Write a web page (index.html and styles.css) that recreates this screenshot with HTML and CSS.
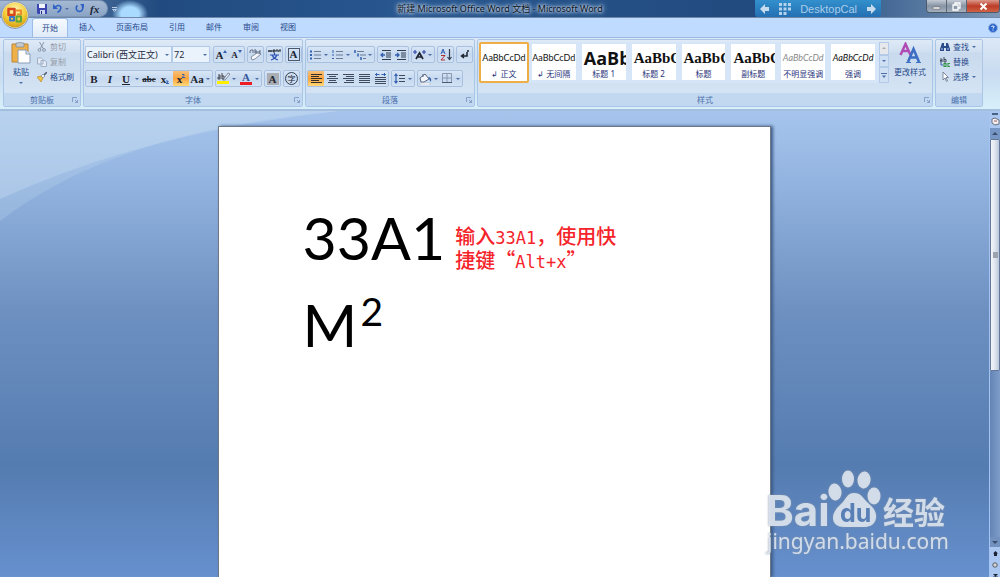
FILE: index.html
```html
<!DOCTYPE html>
<html lang="zh-CN">
  <head>
    <meta charset="UTF-8">
    <title>新建 Microsoft Office Word 文档 - Microsoft Word</title>
    <link rel="stylesheet" href="styles.css">
  </head>
  <body>
    <svg class="defs" aria-hidden="true">
      <symbol id="down" viewBox="0 0 4 2"><path d="M0 0h4L2 2z" fill="#4d6fa6"/></symbol>
      <symbol id="launch" viewBox="0 0 6 6"><path d="M.5 5V.5H5M3 3l2.500 2.500M5.500 3v2.500H3" fill="none" stroke="#86a2ca"/></symbol>
      <symbol id="arrow" viewBox="0 0 10 10"><path d="M0 5l5-5v3h4v4H5v3z" fill="#c6dcee"/></symbol>
    </svg>

    <div class="titlebar">
      <div class="quick">
        <button class="plain" aria-label="保存"><svg width="10" height="10" viewBox="0 0 10 10"><path d="M0 0h10v10H1L0 9z" fill="#3b45b0"/><path d="M2 0h6v4H2z" fill="#f2f5fd"/><path d="M3 6h5v4H3z" fill="#c9d3f0"/><path d="M4 7h1v3H4z" fill="#252c80"/></svg></button>
        <button class="plain" aria-label="撤消"><svg width="9" height="9" viewBox="0 0 9 9"><path d="M2 3.500Q5 0 7.500 2.500Q9 5.500 4.500 8.500" fill="none" stroke="#2f62c4" stroke-width="1.600"/><path d="M0 0v5h5z" fill="#2f62c4"/></svg></button>
        <svg class="caret" width="4" height="2"><use href="#down"/></svg>
        <button class="plain" aria-label="恢复"><svg width="9" height="9" viewBox="0 0 9 9"><path d="M2.500 1.500A3.300 3.300 0 1 0 7 2" fill="none" stroke="#2f62c4" stroke-width="1.600"/><path d="M5 0h4v4z" fill="#2f62c4"/></svg></button>
        <button class="plain fx">fx</button>
      </div>
      <button class="plain custom" aria-label="自定义快速访问工具栏"><svg width="5" height="5" viewBox="0 0 5 5"><path d="M0 .5h5M.5 2.500h4L2.500 4.500z" fill="none" stroke="#b9cde6"/></svg></button>
      <div class="title">新建 Microsoft Office Word 文档 - Microsoft Word</div>
      <div class="tools">
        <div class="cal">
          <svg width="10" height="10"><use href="#arrow"/></svg>
          <svg width="12" height="12" viewBox="0 0 12 12"><path d="M0 1.500h12M0 6h12M0 10.500h8" stroke="#b4d2ea" stroke-width="3" stroke-dasharray="3 1.500"/></svg>
          <span>DesktopCal</span>
          <svg class="flip" width="10" height="10"><use href="#arrow"/></svg>
        </div>
        <div class="window">
          <button aria-label="最小化"><svg width="9" height="9" viewBox="0 0 9 9"><path d="M1 5h7v2H1z" fill="#fff" stroke="#555" stroke-width=".5"/></svg></button>
          <button aria-label="还原"><svg width="9" height="9" viewBox="0 0 9 9"><path d="M3 3V1h5v5H6M1 3h5v5H1z" fill="none" stroke="#fff" stroke-width="1.300"/></svg></button>
          <button class="close" aria-label="关闭"><svg width="9" height="9" viewBox="0 0 9 9"><path d="M1.500 1.500l6 6M7.500 1.500l-6 6" stroke="#fff" stroke-width="2"/></svg></button>
        </div>
      </div>
    </div>

    <button class="orb" aria-label="Office 按钮">
      <svg width="28" height="28" viewBox="0 0 28 28">
        <defs><radialGradient id="gold" cx=".5" cy=".3" r=".7"><stop offset="0" stop-color="#fff6b8"/><stop offset=".6" stop-color="#f3cf3a"/><stop offset="1" stop-color="#d59c12"/></radialGradient></defs>
        <circle cx="14" cy="14" r="13.500" fill="#dfe6ef" stroke="#8a98ae"/>
        <circle cx="14" cy="14" r="12.500" fill="url(#gold)"/>
        <path d="M7.500 8h6v6h-6z" fill="none" stroke="#d8471c" stroke-width="2.500" stroke-linejoin="round"/>
        <path d="M15 9.500h5v4h-4" fill="none" stroke="#e98b28" stroke-width="2" stroke-linejoin="round"/>
        <path d="M9 16h4v3.500H9z" fill="none" stroke="#3f77c8" stroke-width="2" stroke-linejoin="round"/>
        <path d="M15.500 15.500h4.500v5h-4.500z" fill="none" stroke="#5ca63c" stroke-width="2" stroke-linejoin="round"/>
      </svg>
    </button>

    <div class="tabs">
      <button class="tab active">开始</button>
      <button class="tab">插入</button>
      <button class="tab">页面布局</button>
      <button class="tab">引用</button>
      <button class="tab">邮件</button>
      <button class="tab">审阅</button>
      <button class="tab">视图</button>
      <button class="plain help" aria-label="帮助"><svg width="10" height="10" viewBox="0 0 10 10"><circle cx="5" cy="5" r="4.500" fill="#2b66cf" stroke="#8fb0df"/><path d="M3.500 4Q4 2.500 5.500 3T5 5.500M5 6.500v1" fill="none" stroke="#fff"/></svg></button>
    </div>

    <div class="ribbon">
      <div class="group clipboard">
        <div class="content">
          <button class="big">
            <svg width="20" height="22" viewBox="0 0 20 22"><path d="M1 2h16v18H1z" fill="#eeb047" stroke="#c08532"/><path d="M5 1h2q2-2 4 0h2v4H5z" fill="#c3c8cc" stroke="#7d8690" stroke-width=".7"/><path d="M7 8h8l4 4v9H7z" fill="#fff" stroke="#8a9cba"/><path d="M15 8v4h4" fill="#dbe5f3" stroke="#8a9cba"/></svg>
            粘贴
            <svg class="caret" width="4" height="2"><use href="#down"/></svg>
          </button>
          <div class="list">
            <button class="item off"><svg width="10" height="10" viewBox="0 0 10 10"><path d="M2.500 0l4 7M7 0L3 7" stroke="#8796ac"/><circle cx="2.500" cy="8" r="1.400" fill="none" stroke="#8796ac"/><circle cx="7" cy="8" r="1.400" fill="none" stroke="#8796ac"/></svg>剪切</button>
            <button class="item off"><svg width="10" height="10" viewBox="0 0 10 10"><path d="M.5 1h4l1.500 1.500V7H.5zM4 3.500h4L9.500 5v4.500H4z" fill="#e4ebf5" stroke="#a0b0c8"/></svg>复制</button>
            <button class="item"><svg width="10" height="10" viewBox="0 0 10 10"><path d="M0 5l4-1 2 2-2 4z" fill="#efc443" stroke="#b38222" stroke-width=".6"/><path d="M4 4l2-2 2 2-2 2z" fill="#eef2f8" stroke="#66748c" stroke-width=".6"/><path d="M7 3l3-3" stroke="#5a6078" stroke-width="1.600"/></svg>格式刷</button>
          </div>
        </div>
        <div class="label">剪贴板<svg width="6" height="6"><use href="#launch"/></svg></div>
      </div>

      <div class="group font">
        <div class="content rows">
          <div class="row">
            <div class="combos">
              <label class="combo name"><select aria-label="字体"><option>Calibri (西文正文)</option></select><svg class="caret" width="4" height="2"><use href="#down"/></svg></label>
              <label class="combo size"><select aria-label="字号"><option>72</option></select><svg class="caret" width="4" height="2"><use href="#down"/></svg></label>
            </div>
            <div class="set">
              <button class="serif grow" aria-label="增大字体">A<svg width="4" height="3" viewBox="0 0 4 3"><path d="M0 3h4L2 0z" fill="#3560b0"/></svg></button>
              <button class="serif small shrink" aria-label="缩小字体">A<svg width="4" height="3" viewBox="0 0 4 3"><path d="M0 0h4L2 3z" fill="#3560b0"/></svg></button>
            </div>
            <div class="set"><button aria-label="清除格式"><svg width="13" height="13" viewBox="0 0 13 13"><path d="M1 5V3l1-1h2v3M6 1v4h2V3H6M12 3h-2v2h2" fill="none" stroke="#444f68" stroke-width=".8"/><path d="M2 9l6-4 4 1-6 5-3 1z" fill="#f4f6fb" stroke="#6d7a94" stroke-width=".8"/></svg></button></div>
            <div class="set"><button aria-label="拼音指南"><svg width="13" height="13" viewBox="0 0 13 13"><path d="M0 2l1 2 1-2 1 2 1-2M5 3h2V2H5v2h2M8 4V2h2v2M11 4V2h2v2" fill="none" stroke="#1d2430" stroke-width=".9"/><path d="M6.500 5v1.500M2 7h9M4 7q2 4 6 5M9 7q-2 4-6 5" fill="none" stroke="#2c50b4" stroke-width="1.200"/></svg></button></div>
            <div class="set"><button class="serif"><b class="boxed">A</b></button></div>
          </div>
          <div class="row">
            <div class="set wide">
              <button class="serif">B</button>
              <button class="serif italic">I</button>
              <button class="serif"><u>U</u></button>
              <svg class="caret" width="4" height="2"><use href="#down"/></svg>
              <button class="serif small"><s>abc</s></button>
              <button class="serif" aria-label="下标">x<svg width="3" height="4" viewBox="0 0 3 4"><path d="M0 1h2v1L0 3.500h3" fill="none" stroke="#3560b0"/></svg></button>
              <button class="serif on up" aria-label="上标">x<svg width="3" height="4" viewBox="0 0 3 4"><path d="M0 .5h2v1L0 3.500h3" fill="none" stroke="#3560b0"/></svg></button>
              <button class="serif">Aa</button>
              <svg class="caret" width="4" height="2"><use href="#down"/></svg>
            </div>
            <div class="set">
              <button aria-label="突出显示"><svg width="13" height="13" viewBox="0 0 13 13"><path d="M0 9h12v3H0z" fill="#ffee00"/><path d="M1 3h2v4H1V5h2M5 1v6h2V4H5" fill="none" stroke="#333" stroke-width=".9"/><path d="M6 8l5-7 2 1-5 6z" fill="#e9eef8" stroke="#56647e" stroke-width=".7"/></svg></button>
              <svg class="caret" width="4" height="2"><use href="#down"/></svg>
              <button class="serif color">A</button>
              <svg class="caret" width="4" height="2"><use href="#down"/></svg>
            </div>
            <div class="set"><button class="serif"><b class="shade">A</b></button></div>
            <div class="set"><button><span class="ring">字</span></button></div>
          </div>
        </div>
        <div class="label">字体<svg width="6" height="6"><use href="#launch"/></svg></div>
      </div>

      <div class="group para">
        <div class="content rows">
          <div class="row">
            <div class="set">
              <button aria-label="项目符号"><svg width="11" height="10" viewBox="0 0 11 10"><path d="M0 1.500h2M0 5h2M0 8.500h2" stroke="#3560b0" stroke-width="2"/><path d="M4 1.500h7M4 5h7M4 8.500h7" stroke="#6c7c96"/></svg></button>
              <svg class="caret" width="4" height="2"><use href="#down"/></svg>
              <button aria-label="编号"><svg width="11" height="10" viewBox="0 0 11 10"><path d="M1 0v3M0 5h2M0 8.500h2" stroke="#3560b0"/><path d="M4 1.500h7M4 5h7M4 8.500h7" stroke="#6c7c96"/></svg></button>
              <svg class="caret" width="4" height="2"><use href="#down"/></svg>
              <button aria-label="多级列表"><svg width="12" height="10" viewBox="0 0 12 10"><path d="M1 0v3M4 3.500v3M7 7v3" stroke="#3560b0" stroke-width="1.500"/><path d="M3 1.500h7M6 5h6M9 8.500h3" stroke="#6c7c96"/></svg></button>
              <svg class="caret" width="4" height="2"><use href="#down"/></svg>
            </div>
            <div class="set">
              <button aria-label="减少缩进"><svg width="11" height="10" viewBox="0 0 11 10"><path d="M2 .5h9M6 3h5M6 5h5M6 7h5M2 9.500h9" stroke="#333d50"/><path d="M5 5H1m2-2L1 5l2 2" fill="none" stroke="#3560b0" stroke-width="1.300"/></svg></button>
              <button aria-label="增加缩进"><svg width="11" height="10" viewBox="0 0 11 10"><path d="M2 .5h9M6 3h5M6 5h5M6 7h5M2 9.500h9" stroke="#333d50"/><path d="M0 5h4M2 3l2 2-2 2" fill="none" stroke="#3560b0" stroke-width="1.300"/></svg></button>
            </div>
            <div class="set">
              <button aria-label="中文版式"><svg width="13" height="10" viewBox="0 0 13 10"><path d="M3 9l3.500-6L10 9M5 7h3" fill="none" stroke="#1e2430" stroke-width="1.700"/><path d="M0 2h4M2 0v4M9 2h4M11 0v4" stroke="#3148a8" stroke-width="1.200"/></svg></button>
              <svg class="caret" width="4" height="2"><use href="#down"/></svg>
            </div>
            <div class="set"><button aria-label="排序"><svg width="12" height="13" viewBox="0 0 12 13"><path d="M1 6l2-5 2 5M2 4h2" fill="none" stroke="#3560b0"/><path d="M1 7.500h4L1 12h4" fill="none" stroke="#b03030"/><path d="M9.500 1v10M7.500 9l2 2.500 2-2.500" fill="none" stroke="#333d50" stroke-width="1.200"/></svg></button></div>
            <div class="set"><button aria-label="显示标记"><svg width="10" height="10" viewBox="0 0 10 10"><path d="M8 0v2M7 2v4H2M4 4L1.500 6 4 8" fill="none" stroke="#1e2430" stroke-width="1.500"/></svg></button></div>
          </div>
          <div class="row">
            <div class="set wide">
              <button class="on" aria-label="左对齐"><svg width="11" height="9" viewBox="0 0 11 9"><path d="M0 .5h11M0 2.500h8M0 4.500h11M0 6.500h8M0 8.500h11" stroke="#33302c"/></svg></button>
              <button aria-label="居中"><svg width="11" height="9" viewBox="0 0 11 9"><path d="M0 .5h11M2 2.500h7M0 4.500h11M2 6.500h7M1 8.500h9" stroke="#404b60"/></svg></button>
              <button aria-label="右对齐"><svg width="11" height="9" viewBox="0 0 11 9"><path d="M0 .5h11M3 2.500h8M0 4.500h11M3 6.500h8M1 8.500h10" stroke="#404b60"/></svg></button>
              <button aria-label="两端对齐"><svg width="11" height="9" viewBox="0 0 11 9"><path d="M0 .5h11M0 2.500h11M0 4.500h11M0 6.500h11M0 8.500h11" stroke="#404b60"/></svg></button>
              <button aria-label="分散对齐"><svg width="11" height="11" viewBox="0 0 11 11"><path d="M0 4.500h11M0 6.500h11M0 8.500h11M0 10.500h11" stroke="#404b60"/><path d="M0 1.500h4.500M6.500 1.500H11M2 0L.5 1.500 2 3M9 0l1.500 1.500L9 3" fill="none" stroke="#3560b0"/></svg></button>
            </div>
            <div class="set">
              <button aria-label="行距"><svg width="12" height="11" viewBox="0 0 12 11"><path d="M5 2.500h6M5 5.500h6M5 8.500h6" stroke="#404b60"/><path d="M2 1v9M.5 3L2 1l1.500 2M.5 8L2 10l1.500-2" fill="none" stroke="#3560b0" stroke-width="1.200"/></svg></button>
              <svg class="caret" width="4" height="2"><use href="#down"/></svg>
            </div>
            <div class="set">
              <button aria-label="底纹"><svg width="13" height="12" viewBox="0 0 13 12"><path d="M1 5l5-4 4 5-5 3H2z" fill="#f3f6fb" stroke="#5a6880"/><path d="M4 4V1" stroke="#5a6880"/><path d="M9 4q4 0 3 5-2-2-2-4z" fill="#3560b0"/><path d="M1 10h10v2H1z" fill="#fff" stroke="#9aa8bd" stroke-width=".5"/></svg></button>
              <svg class="caret" width="4" height="2"><use href="#down"/></svg>
              <button aria-label="边框"><svg width="11" height="11" viewBox="0 0 11 11"><path d="M.5.5h9v9h-9zM5 0v10M0 5h10" fill="none" stroke="#8a98b2"/><path d="M0 9.500h10" stroke="#4d5a72"/></svg></button>
              <svg class="caret" width="4" height="2"><use href="#down"/></svg>
            </div>
          </div>
        </div>
        <div class="label">段落<svg width="6" height="6"><use href="#launch"/></svg></div>
      </div>

      <div class="group styles">
        <div class="content">
          <div class="gallery">
            <button class="style active"><span class="body">AaBbCcDd</span>↲ 正文</button>
            <button class="style"><span class="body">AaBbCcDd</span>↲ 无间隔</button>
            <button class="style"><span class="h1">AaBb</span>标题 1</button>
            <button class="style"><span class="h2">AaBbC</span>标题 2</button>
            <button class="style"><span class="h2">AaBbC</span>标题</button>
            <button class="style"><span class="h2">AaBbC</span>副标题</button>
            <button class="style"><span class="body subtle">AaBbCcDd</span>不明显强调</button>
            <button class="style"><span class="body italic">AaBbCcDd</span>强调</button>
            <div class="more">
              <button class="off" aria-label="上一行"><svg width="4" height="2" viewBox="0 0 4 2"><path d="M0 2h4L2 0z" fill="#a9a9a9"/></svg></button>
              <button aria-label="下一行"><svg width="4" height="2"><use href="#down"/></svg></button>
              <button aria-label="其他"><svg width="6" height="5" viewBox="0 0 6 5"><path d="M0 .5h6" stroke="#4d6fa6"/><path d="M1 2.500h4L3 5z" fill="#4d6fa6"/></svg></button>
            </div>
          </div>
          <button class="big">
            <svg width="22" height="22" viewBox="0 0 22 22"><path d="M1.500 13L6.500 2l5 11M3 9h7" fill="none" stroke="#b04bb5" stroke-width="2.500"/><path d="M9 20l5.500-13L20 20M11 15.500h7" fill="none" stroke="#3c6fc4" stroke-width="2.600"/><path d="M7 20.500h5M17 20.500h5" stroke="#3c6fc4"/></svg>
            更改样式
            <svg class="caret" width="4" height="2"><use href="#down"/></svg>
          </button>
        </div>
        <div class="label">样式<svg width="6" height="6"><use href="#launch"/></svg></div>
      </div>

      <div class="group edit">
        <div class="content">
          <div class="list">
            <button class="item"><svg width="10" height="10" viewBox="0 0 10 10"><path d="M2 1h2v3h2V1h2l2 6v2H6V6H4v3H0V7z" fill="#2c4b8c"/><path d="M1 7h2M7 7h2" stroke="#b8cdf0"/></svg>查找<svg class="caret" width="4" height="2"><use href="#down"/></svg></button>
            <button class="item"><svg width="10" height="10" viewBox="0 0 10 10"><path d="M0 2h2v3H0V3.500h2M4 0v5h2V2.500H4" fill="none" stroke="#333d50" stroke-width=".9"/><path d="M4 6.500h2v3H4zM10 6.500H8v3h2" fill="none" stroke="#2d9440" stroke-width="1.100"/><path d="M1 6v2h2" fill="none" stroke="#3560b0"/></svg>替换</button>
            <button class="item"><svg width="10" height="10" viewBox="0 0 10 10"><path d="M3 0v8l2-2 1.500 3.500 1-.5L6 5.500h2.500z" fill="#fff" stroke="#66748c" stroke-width=".8"/></svg>选择<svg class="caret" width="4" height="2"><use href="#down"/></svg></button>
          </div>
        </div>
        <div class="label">编辑</div>
      </div>
    </div>

    <div class="workspace">
      <svg class="swoosh" width="340" height="110" viewBox="0 0 340 110" aria-hidden="true">
        <path d="M0 0h340Q120 18 0 110z" fill="#c4dcf0" opacity=".25"/>
        <path d="M0 0h340Q150 20 0 88z" fill="#d2e4f6" opacity=".3"/>
      </svg>
      <div class="desk">
        <div class="page">
          <div class="line typed">33A1
            <p class="note">输入<span>33A1</span>，使用快<br>捷键“<span>Alt+x</span>”</p>
          </div>
          <div class="line">M<sup>2</sup></div>
        </div>
      </div>
      <div class="scroll">
        <i class="split"></i>
        <svg width="9" height="9" viewBox="0 0 9 9"><path d="M1 2l3-1 4 2v4L4 8 1 6z" fill="#f1eef0" stroke="#6d7080"/><path d="M3 3h3v2H3z" fill="#c9a9a9"/></svg>
        <button class="up" aria-label="向上滚动"><svg width="6" height="3" viewBox="0 0 6 3"><path d="M0 3h6L3 0z" fill="#3a4f70"/></svg></button>
        <div class="thumb"><i></i></div>
        <div class="track"></div>
        <button class="bottom" aria-label="向下滚动"><svg width="6" height="3" viewBox="0 0 6 3"><path d="M0 0h6L3 3z" fill="#3a4f70"/></svg></button>
        <div class="browse">
          <svg width="5" height="5" viewBox="0 0 5 5"><path d="M0 2.500L2.500 0 5 2.500H4V5H1V2.500z" fill="#1a2233"/></svg>
          <svg width="6" height="6" viewBox="0 0 6 6"><circle cx="3" cy="3" r="2.200" fill="#d8d8d8" stroke="#555a66"/></svg>
          <svg width="5" height="5" viewBox="0 0 5 5"><path d="M0 0h5L2.500 2.500zM0 2.500h5L2.500 5z" fill="#1a2233"/></svg>
        </div>
      </div>
    </div>

    <svg class="watermark" width="186" height="90" viewBox="0 0 186 90">
      <g fill="#dbe4ef" fill-opacity=".9">
        <text class="bai" x="4" y="57">Bai</text>
        <ellipse cx="73" cy="23" rx="6.500" ry="8.500" transform="rotate(-8 73 23)"/>
        <ellipse cx="86" cy="10" rx="6" ry="8.500"/>
        <ellipse cx="102" cy="11" rx="6.500" ry="8.500" transform="rotate(8 102 11)"/>
        <ellipse cx="112" cy="27" rx="6.500" ry="8.500"/>
        <path d="M92 24c7 0 9 5 13 9 6 5 10 10 9 16-1 7-7 9-12 9H82c-6 0-11-3-11-9 0-7 6-12 10-16 3-4 5-9 11-9z"/>
        <text class="jing" x="121" y="55">经验</text>
        <text class="url" x="5" y="80">jingyan.baidu.com</text>
      </g>
      <text class="du" x="78" y="53">du</text>
    </svg>
  </body>
</html>
```

FILE: styles.css
```css
*
{
  box-sizing: border-box;
}
body
{
  position: relative;
  display: flex;
  flex-direction: column;
  height: 100vh;
  margin: 0;
  overflow: hidden;
  background: #bfdbff;
  color: #27498a;
  font: 8px/10px "Noto Sans", "Noto Sans CJK SC", sans-serif;
}
button
{
  display: flex;
  align-items: center;
  justify-content: center;
  padding: 0;
  border: 0;
  background: none;
  color: inherit;
  font: inherit;
  white-space: nowrap;
}
svg
{
  flex: none;
}
.defs
{
  position: absolute;
  width: 0;
  height: 0;
}

/* title bar */
.titlebar
{
  display: grid;
  flex: none;
  grid-template-columns: 107px calc(50% - 213px) 212px 1fr;
  justify-items: start;
  height: 18px;
  border-bottom: 1px solid #7189a8;
  background: radial-gradient(ellipse 18px 14px at 130px 14px, #a9daff 50%, transparent), linear-gradient(90deg, #6f8fb5, #214b80 160px, #28568f 40%, #21497d 80%, #587aa2 93%, #7e97b5);
}
.quick
{
  display: flex;
  align-items: center;
  gap: 6px;
  height: 17px;
  padding: 0 8px 0 37px;
  border: 1px solid #7e94b5;
  border-left: 0;
  border-radius: 0 9px 9px 0;
  background: linear-gradient(#a5b9d3, #8ba4c5);
}
.quick .caret
{
  margin-left: -3px;
}
.custom
{
  padding: 6px 5px;
}
.fx
{
  color: #1c2636;
  font: italic bold 11px "Liberation Serif", serif;
}
.title
{
  justify-self: center;
  padding: 0 3px;
  color: #0b1424;
  font-size: 9px;
  line-height: 18px;
  text-shadow: 0 0 3px #b4c7de, 0 0 3px #b4c7de, 0 0 5px #a9c0dc, 0 0 7px #a9c0dc;
  white-space: nowrap;
}
.tools
{
  display: flex;
  justify-content: flex-end;
  justify-self: stretch;
  gap: 45px;
}
.cal
{
  display: flex;
  align-items: center;
  gap: 9px;
  height: 17px;
  padding: 0 5px;
  border-radius: 0 0 3px 3px;
  background: linear-gradient(#3390cc, #236fb3);
  color: #a9cdea;
  font: 11px "Liberation Sans", sans-serif;
}
.flip
{
  transform: scaleX(-1);
}
.window
{
  display: flex;
  height: 13px;
  border: 1px solid #4d5a6c;
  border-top: 0;
  border-radius: 0 0 4px 4px;
  overflow: hidden;
}
.window button
{
  width: 20px;
  border-right: 1px solid #5b6878;
  background: linear-gradient(#c3cad4, #8794a5 50%, #a5b0be);
}
.window .close
{
  width: 32px;
  border: 0;
  background: linear-gradient(#dc9a8c, #bc3c27 50%, #cf6245);
}
.orb
{
  position: absolute;
  top: 1px;
  left: 1px;
}

/* tabs */
.tabs
{
  display: flex;
  flex: none;
  gap: 1px;
  height: 19px;
  padding-left: 32px;
}
.tab
{
  padding: 0 10px 2px;
}
.tab.active
{
  padding: 0 9px;
  border: 1px solid #9dbde6;
  border-bottom: 0;
  border-radius: 3px 3px 0 0;
  background: linear-gradient(#f6faff, #e0ebf8);
}
.help
{
  margin-left: auto;
  padding-right: 2px;
}

/* ribbon */
.ribbon
{
  display: flex;
  flex: none;
  gap: 2px;
  height: 74px;
  padding: 1px 17px 2px 3px;
  border: 1px solid #9ebce3;
  border-bottom: 2px solid #a3bfdd;
  border-left: 0;
  border-right: 0;
  background: linear-gradient(#dce8f6, #d0e0f2 30%, #c8dbf0 50%, #d8f0fb);
}
.group
{
  display: flex;
  flex: none;
  flex-direction: column;
  border: 1px solid #aac6e6;
  border-radius: 2px;
  background: linear-gradient(#dfeaf7, #d0dff1 18%, #c9daee 20%, #d8e7f6);
}
.clipboard
{
  width: 78px;
}
.font
{
  width: 220px;
}
.para
{
  width: 170px;
}
.styles
{
  flex: 1;
  min-width: 0;
}
.edit
{
  width: 48px;
}
.content
{
  display: flex;
  flex: 1;
  align-items: flex-start;
  padding: 2px 1px 0;
}
.label
{
  display: flex;
  align-items: center;
  justify-content: center;
  height: 13px;
  background: #c1d8f0;
  color: #4c70ac;
}
.label svg
{
  margin: 0 2px 0 auto;
}
.label:has(svg)::before
{
  content: "";
  width: 8px;
  margin-right: auto;
}
.big
{
  flex: none;
  flex-direction: column;
  gap: 3px;
  width: 32px;
}
.big .caret
{
  margin-top: 2px;
}
.list
{
  display: grid;
  gap: 5px;
}
.item
{
  justify-content: flex-start;
  gap: 3px;
  height: 10px;
}
.off
{
  color: #959ca8;
}

/* font and paragraph rows */
.rows
{
  flex-direction: column;
  gap: 7px;
  padding-top: 6px;
}
.row
{
  display: flex;
  gap: 2px;
}
.combos
{
  display: flex;
  width: 125px;
  margin-right: 1px;
}
.combo
{
  display: flex;
  align-items: center;
  height: 17px;
  padding: 0 2px 0 1px;
  border: 1px solid #b3cbe8;
  background: #eaf2fb;
}
.name
{
  width: 87px;
}
.size
{
  width: 38px;
}
.combo select
{
  flex: 1;
  min-width: 0;
  padding: 0;
  border: 0;
  appearance: none;
  background: none;
  color: #1f2b40;
  font-size: 9px;
  font-family: inherit;
}
.set
{
  display: flex;
  align-items: center;
  height: 17px;
  border: 1px solid #a9c1e1;
  border-radius: 2px;
  background: linear-gradient(#d8e6f6, #c6d9ef 50%, #d2e2f4);
}
.set button
{
  width: 15px;
  height: 15px;
}
.set .caret
{
  margin: 0 2px 0 1px;
}
.wide button
{
  width: 16px;
}
.set .on
{
  background: linear-gradient(#f5c07a, #fba43d 50%, #ffd978);
}
.serif
{
  color: #1d2430;
  font: bold 11px "Liberation Serif", serif;
}
.serif.small
{
  font-size: 9px;
}
.italic
{
  font-style: italic;
}
.serif svg
{
  align-self: flex-end;
  margin-bottom: 2px;
}
.grow svg,
.shrink svg,
.up svg
{
  align-self: flex-start;
  margin-top: 3px;
}
.boxed
{
  width: 12px;
  border: 1px solid #4e586c;
  line-height: 11px;
}
.shade
{
  width: 12px;
  background: #a9adb4;
  line-height: 12px;
}
.ring
{
  width: 13px;
  border: 1px solid #333d50;
  border-radius: 50%;
  color: #1d2430;
  line-height: 11px;
}
.set .color
{
  width: 12px;
  height: 13px;
  margin: 0 2px;
  border-bottom: 3px solid #ee1c25;
  color: #35569c;
}

/* styles gallery */
.gallery
{
  display: flex;
  flex: 1;
  min-width: 0;
  height: 41px;
  background: #d6e6f8;
}
.style
{
  flex: 1 1 0;
  flex-direction: column;
  justify-content: flex-end;
  min-width: 0;
  margin: 2px 3px 3px;
  padding-bottom: 1px;
  background: #fff;
  color: #26327a;
  overflow: hidden;
}
.style.active
{
  flex-basis: 6px;
  margin: 0;
  padding-bottom: 2px;
  border: 2px solid #efad45;
  border-radius: 2px;
}
.style span
{
  align-self: stretch;
  height: 20px;
  padding-left: 2px;
  color: #111;
  overflow: hidden;
  text-align: left;
}
.style .body
{
  padding: 0;
  font-family: Lato, sans-serif;
  font-size: 9px;
  line-height: 18px;
  text-align: center;
}
.style .subtle
{
  color: #8a8a8a;
  font-style: italic;
}
.style .h1
{
  font: bold 18px/18px "Open Sans", sans-serif;
}
.style .h2
{
  font: bold 15px/18px "Liberation Serif", serif;
}
.more
{
  display: grid;
  flex: none;
  width: 10px;
  margin-left: 1px;
}
.more button
{
  border: 1px solid #b3cbe8;
  background: #cfe0f4;
}
.more .off
{
  background: #e6e8ec;
}
.styles .big
{
  width: 42px;
}
.edit .content
{
  padding-left: 4px;
}

/* document */
.workspace
{
  position: relative;
  display: flex;
  flex: 1;
  min-height: 0;
  background: linear-gradient(#a6c4ec, #9abae5 10%, #6d90c1 43%, #557cb0 76%, #6690ce);
}
.swoosh
{
  position: absolute;
  top: 0;
  left: 0;
}
.desk
{
  position: relative;
  flex: 1;
  padding-top: 15px;
}
.page
{
  width: 56%;
  min-height: 100%;
  margin: 0 auto;
  padding: 67px 85px 0 84px;
  border: 1px solid #6f7885;
  border-bottom: 0;
  background: #fff;
  box-shadow: 2px 0 3px #3c5a86;
}
.line
{
  height: 87px;
  color: #000;
  font: 59px/87px Lato, sans-serif;
}
.typed
{
  display: flex;
  gap: 10px;
}
.line sup
{
  margin-left: 3px;
  font-size: 39px;
  line-height: 39px;
  vertical-align: 21px;
}
.note
{
  margin: 0;
  padding-top: 30px;
  color: #f5242b;
  font: 500 20px/24px "Noto Sans CJK SC", sans-serif;
  white-space: nowrap;
}
.note span
{
  font: 17px "DejaVu Sans Mono", monospace;
}

/* scroll bar */
.scroll
{
  display: flex;
  flex-direction: column;
  align-items: center;
  gap: 2px;
  width: 11px;
  padding-top: 2px;
  border-left: 1px solid #a5c4f2;
  background: #a9c7f0;
}
.scroll > *
{
  flex: none;
}
.split
{
  width: 6px;
  height: 2px;
  background: #4b6288;
}
.scroll .up
{
  width: 100%;
  height: 11px;
  margin-bottom: -2px;
  background: #7696c5;
}
.scroll .up svg
{
  align-self: center;
  margin: 0;
}
.thumb
{
  display: grid;
  place-items: center;
  width: 100%;
  height: 50%;
  border: 1px solid #66789a;
  border-radius: 1px;
  background: linear-gradient(90deg, #f4f6fa, #dfe5ee 50%, #b9c6da);
}
.thumb i
{
  width: 5px;
  height: 6px;
  background: #9ba3ae;
}
.scroll .track
{
  flex: 1;
  width: 100%;
  margin: -2px 0;
  background: linear-gradient(90deg, #6385b5, #7f9cc9);
}
.bottom
{
  width: 100%;
  height: 10px;
  background: #7391bf;
}
.browse
{
  display: grid;
  justify-items: center;
  gap: 6px;
  height: 28px;
  padding-top: 2px;
}

.watermark
{
  position: absolute;
  right: 52px;
  bottom: 18px;
  overflow: visible;
  filter: drop-shadow(0 0 1px #8493a8);
}
.bai
{
  font: bold 42px Inter, sans-serif;
}
.du
{
  fill: #587fb6;
  font: bold 25px Inter, sans-serif;
}
.jing
{
  font: bold 31px "Noto Sans CJK SC", sans-serif;
}
.url
{
  font: 21px "Noto Sans", sans-serif;
}
```
